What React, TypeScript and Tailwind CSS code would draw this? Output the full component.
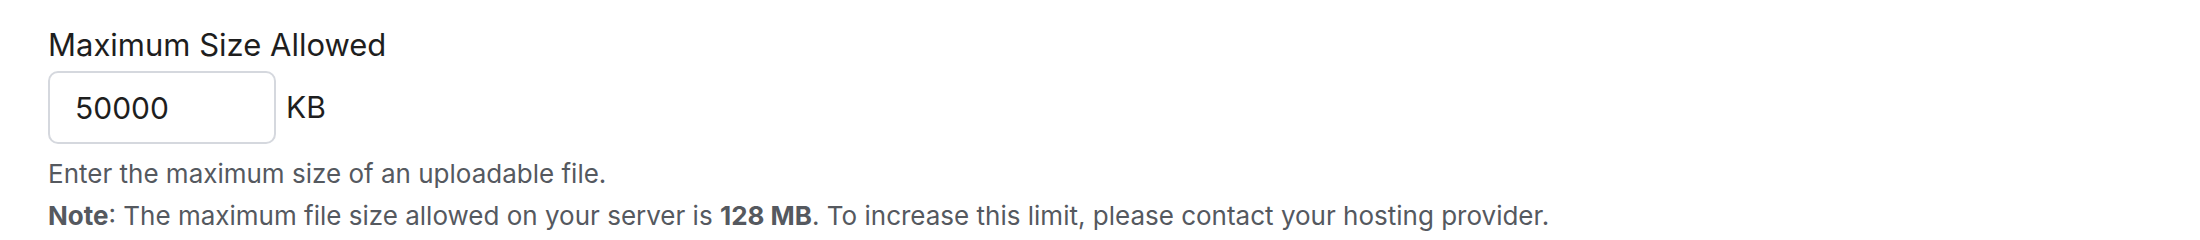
export default function App() {
  return (
    <div className="min-h-screen bg-white pl-[48px] pt-[25px]" style={{ fontFamily: 'Inter, "Noto Sans", sans-serif' }}>
      <label className="block text-[31px] leading-[40px] text-[#1e1e1e]">Maximum Size Allowed</label>
      <div className="mt-[6px] flex items-center gap-[10px]">
        <input
          type="text"
          defaultValue="50000"
          className="h-[73px] w-[228px] rounded-[10px] border-2 border-[#d5d8de] bg-white px-[25px] text-[30px] text-[#1e1e1e] outline-none"
        />
        <span className="text-[30px] text-[#1e1e1e]">KB</span>
      </div>
      <div className="mt-[9px] text-[26px] leading-[42px] text-[#55595f]">
        <p>Enter the maximum size of an uploadable file.</p>
        <p>
          <strong className="font-bold">Note</strong>: The maximum file size allowed on your server is{' '}
          <strong className="font-bold">128 MB</strong>. To increase this limit, please contact your hosting provider.
        </p>
      </div>
    </div>
  );
}
